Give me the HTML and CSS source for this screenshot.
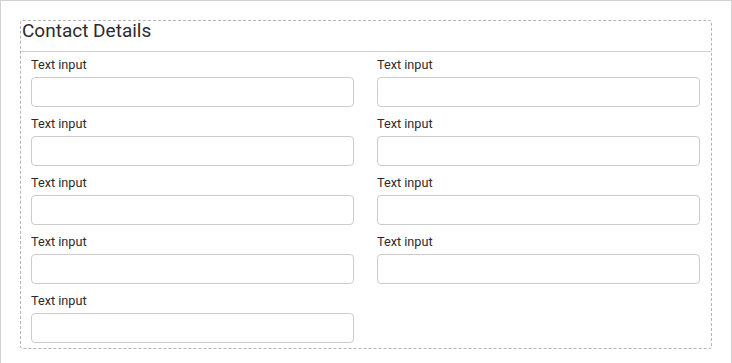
FILE: index.html
```html
<!DOCTYPE html>
<html lang="en">
<head>
    <meta charset="UTF-8">
    <meta name="viewport" content="width=device-width, initial-scale=1.0">
    <title>Contact Details</title>
    <link rel="stylesheet" href="styles.css">
</head>
<body>

<div class="frame">
    <!-- Bloco de contato -->
    <div class="panel">
        <div class="panel-title">Contact Details</div>

        <div class="fields">
            <div class="field">
                <label>Text input</label>
                <input type="text" class="text-input">
            </div>
            <div class="field">
                <label>Text input</label>
                <input type="text" class="text-input">
            </div>
            <div class="field">
                <label>Text input</label>
                <input type="text" class="text-input">
            </div>
            <div class="field">
                <label>Text input</label>
                <input type="text" class="text-input">
            </div>
            <div class="field">
                <label>Text input</label>
                <input type="text" class="text-input">
            </div>
            <div class="field">
                <label>Text input</label>
                <input type="text" class="text-input">
            </div>
            <div class="field">
                <label>Text input</label>
                <input type="text" class="text-input">
            </div>
            <div class="field">
                <label>Text input</label>
                <input type="text" class="text-input">
            </div>
            <div class="field">
                <label>Text input</label>
                <input type="text" class="text-input">
            </div>
        </div>
    </div>
</div>

</body>
</html>
```

FILE: styles.css
```css
body {
    font-family: Roboto, "Liberation Sans", Arial, sans-serif;
    margin: 0;
    background-color: #fff;
    color: #2b2b2b;
}
.frame {
    width: 732px;
    height: 363px;
    box-sizing: border-box;
    border: 1px solid #d2d2d2;
    border-bottom: none;
    padding: 19px;
}
.panel {
    border: 1px dashed #b4b4b4;
    border-radius: 3px;
}
.panel-title {
    font-size: 19px;
    line-height: 18px;
    padding: 1px 1px 11px;
    border-bottom: 1px solid #cfcfcf;
}
.fields {
    display: grid;
    grid-template-columns: 1fr 1fr;
    column-gap: 23px;
    row-gap: 10px;
    padding: 6px 11px 5px 10px;
}
.field label {
    display: block;
    font-size: 12.7px;
    line-height: 14px;
    margin-bottom: 5px;
}
.text-input {
    display: block;
    width: 100%;
    height: 30px;
    box-sizing: border-box;
    border: 1px solid #cbcbcb;
    border-radius: 4px;
    background-color: #fff;
    margin: 0;
}
```
